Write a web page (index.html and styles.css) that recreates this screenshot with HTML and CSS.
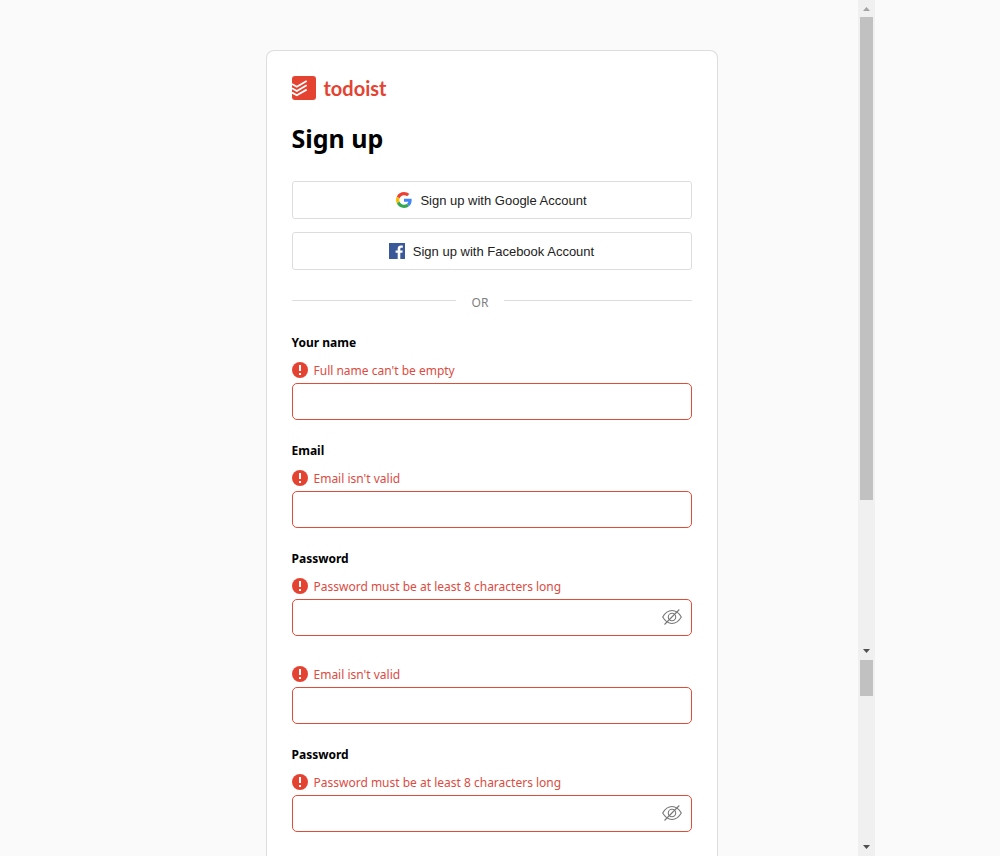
FILE: index.html
```html
<!DOCTYPE html>
<html lang="en">
<head>
<meta charset="utf-8">
<meta name="viewport" content="width=device-width, initial-scale=1">
<title>Todoist: Sign up</title>
<link rel="stylesheet" href="styles.css">
</head>
<body>
<svg class="sprite" aria-hidden="true">
  <symbol id="alert" viewBox="0 0 16 16">
    <circle cx="8" cy="8" r="8" fill="#e44332"/>
    <path d="M7 3h2v6H7zM7 11h2v2H7z" fill="#fff"/>
  </symbol>
  <symbol id="eye-off" viewBox="0 0 20 16">
    <g fill="none" stroke="#777" stroke-width="1.100">
      <path d="M.7 8C3 4 6.300 1.500 10 1.500S17 4 19.300 8C17 12 13.700 14.500 10 14.500S3 12 .7 8z"/>
      <circle cx="10" cy="8" r="3.700"/>
      <path d="M2.500 15.500 17.300.5"/>
    </g>
  </symbol>
</svg>
<div class="frame">
  <main class="page">
    <form class="card" novalidate>
      <div class="brand">
        <svg class="brand-mark" viewBox="0 0 24 24" aria-hidden="true">
          <rect width="24" height="24" rx="3" fill="#e44332"/>
          <g fill="none" stroke="#fff" stroke-width="1.800" stroke-linejoin="round">
            <path d="M0 8 4.800 10.700 14.700 5"/>
            <path d="M0 12.300 4.800 15 14.700 9.300"/>
            <path d="M0 16.600 4.800 19.300 14.700 13.600"/>
          </g>
        </svg>
        <span class="brand-name">todoist</span>
      </div>
      <h1 class="title">Sign up</h1>
      <div class="providers">
        <button class="provider" type="button">
          <svg class="icon" viewBox="0 0 48 48" aria-hidden="true">
            <path fill="#ea4335" d="M24 9.500c3.540 0 6.710 1.220 9.210 3.600l6.850-6.850C35.900 2.380 30.470 0 24 0 14.620 0 6.510 5.380 2.560 13.220l7.980 6.190C12.430 13.720 17.740 9.500 24 9.500z"/>
            <path fill="#4285f4" d="M46.980 24.550c0-1.570-.15-3.090-.38-4.550H24v9.020h12.940c-.58 2.960-2.260 5.480-4.780 7.180l7.730 6c4.510-4.180 7.090-10.360 7.090-17.650z"/>
            <path fill="#fbbc05" d="M10.530 28.590c-.48-1.450-.76-2.990-.76-4.590s.27-3.140.76-4.590l-7.980-6.190C.92 16.460 0 20.120 0 24s.92 7.540 2.560 10.780l7.970-6.190z"/>
            <path fill="#34a853" d="M24 48c6.480 0 11.930-2.130 15.890-5.810l-7.730-6c-2.150 1.450-4.920 2.300-8.160 2.300-6.260 0-11.570-4.220-13.470-9.910l-7.980 6.190C6.510 42.620 14.620 48 24 48z"/>
          </svg>
          Sign up with Google Account
        </button>
        <button class="provider" type="button">
          <svg class="icon" viewBox="0 0 16 16" aria-hidden="true">
            <path fill="#3b5998" d="M0 0h16v16H0z"/>
            <path fill="#fff" d="M8.700 16V9.800H6.600V7.400h2.100V5.600c0-2.100 1.300-3.200 3.200-3.200.9 0 1.600.1 1.900.1v2.200h-1.300c-1 0-1.200.5-1.200 1.200v1.500h2.400L13.400 9.800h-2.100V16z"/>
          </svg>
          Sign up with Facebook Account
        </button>
      </div>
      <div class="divider"><span class="divider-text">OR</span></div>

      <div class="field">
        <label class="label" for="name">Your name</label>
        <p class="error" id="name-error"><svg class="icon" aria-hidden="true"><use href="#alert"/></svg>Full name can't be empty</p>
        <div class="control"><input class="input" id="name" type="text" aria-describedby="name-error"></div>
      </div>
      <div class="field">
        <label class="label" for="email">Email</label>
        <p class="error" id="email-error"><svg class="icon" aria-hidden="true"><use href="#alert"/></svg>Email isn't valid</p>
        <div class="control"><input class="input" id="email" type="email" aria-describedby="email-error"></div>
      </div>
      <div class="field">
        <label class="label" for="password">Password</label>
        <p class="error" id="password-error"><svg class="icon" aria-hidden="true"><use href="#alert"/></svg>Password must be at least 8 characters long</p>
        <div class="control">
          <input class="input" id="password" type="password" aria-describedby="password-error">
          <button class="reveal" type="button" aria-label="Show password"><svg class="eye" aria-hidden="true"><use href="#eye-off"/></svg></button>
        </div>
      </div>
      <div class="field field-unlabelled">
        <p class="error" id="email2-error"><svg class="icon" aria-hidden="true"><use href="#alert"/></svg>Email isn't valid</p>
        <div class="control"><input class="input" id="email2" type="email" aria-label="Email" aria-describedby="email2-error"></div>
      </div>
      <div class="field">
        <label class="label" for="password2">Password</label>
        <p class="error" id="password2-error"><svg class="icon" aria-hidden="true"><use href="#alert"/></svg>Password must be at least 8 characters long</p>
        <div class="control">
          <input class="input" id="password2" type="password" aria-describedby="password2-error">
          <button class="reveal" type="button" aria-label="Show password"><svg class="eye" aria-hidden="true"><use href="#eye-off"/></svg></button>
        </div>
      </div>
    </form>
  </main>
  <div class="scroll" aria-hidden="true">
    <div class="track track-main">
      <svg class="arrow" viewBox="0 0 17 17"><path d="M5 11 8.500 7 12 11z" fill="#a3a3a3"/></svg>
      <div class="thumb thumb-large"></div>
      <svg class="arrow arrow-end" viewBox="0 0 17 17"><path d="M5 6 8.500 10 12 6z" fill="#505050"/></svg>
    </div>
    <div class="track track-rest">
      <div class="thumb thumb-small"></div>
      <svg class="arrow arrow-end" viewBox="0 0 17 17"><path d="M5 6 8.500 10 12 6z" fill="#505050"/></svg>
    </div>
  </div>
</div>
</body>
</html>
```
FILE: styles.css
```css
* {
  box-sizing: border-box;
}

body {
  margin: 0;
  background: #fafafa;
  color: #000;
  font-family: "Segoe UI", "Noto Sans", sans-serif;
  font-size: 13px;
}

.sprite {
  position: absolute;
  width: 0;
  height: 0;
}

.frame {
  display: flex;
  width: 100%;
  max-width: 750px;
  min-height: 100vh;
  margin: 0 auto;
}

.page {
  flex: 1;
  display: flex;
  justify-content: center;
  padding-top: 50px;
}

.card {
  width: 100%;
  max-width: 452px;
  padding: 25px 25px 24px;
  background: #fff;
  border: 1px solid #ddd;
  border-bottom: 0;
  border-radius: 8px 8px 0 0;
}

.brand {
  display: flex;
  align-items: flex-start;
  gap: 8px;
}

.brand-mark {
  width: 24px;
  height: 24px;
}

.brand-name {
  color: #e44332;
  font-family: Lato, sans-serif;
  font-size: 20px;
  font-weight: 700;
  line-height: 24px;
}

.title {
  margin: 20px 0 25px;
  font-size: 25px;
  font-weight: 700;
  line-height: 36px;
}

.providers {
  display: grid;
  gap: 13px;
}

.provider {
  display: flex;
  align-items: center;
  justify-content: center;
  gap: 8px;
  height: 38px;
  padding: 0;
  background: #fff;
  border: 1px solid #ddd;
  border-radius: 3px;
  color: #222;
  font-family: Arial, "Liberation Sans", sans-serif;
  font-size: 13px;
}

.icon {
  flex: none;
  width: 16px;
  height: 16px;
}

.divider {
  display: flex;
  align-items: center;
  margin: 19px 0 21px;
  color: #808080;
}

.divider::before,
.divider::after {
  content: "";
  flex: 164;
  border-top: 1px solid #ddd;
}

.divider::after {
  flex: 187;
}

.divider-text {
  padding: 4px 16px 0;
  font-size: 12px;
  line-height: 19px;
}

.field + .field {
  margin-top: 21px;
}

.field + .field-unlabelled {
  margin-top: 30px;
}

.label {
  display: block;
  margin-bottom: 9px;
  font-size: 12px;
  font-weight: 700;
  line-height: 20px;
}

.error {
  display: flex;
  align-items: flex-start;
  gap: 6px;
  margin: 0 0 3px;
  color: #db4c3f;
  font-size: 12px;
  line-height: 18px;
}

.control {
  position: relative;
}

.input {
  display: block;
  width: 100%;
  height: 37px;
  padding: 0 10px;
  background: #fff;
  border: 1px solid #de4c3a;
  border-radius: 5px;
  font: inherit;
}

.reveal {
  position: absolute;
  top: 0;
  right: 0;
  display: flex;
  align-items: center;
  height: 36px;
  padding: 0 10px;
  background: none;
  border: 0;
}

.eye {
  width: 20px;
  height: 16px;
}

.scroll {
  display: flex;
  flex-direction: column;
  width: 17px;
  background: #f0f0f0;
}

.track {
  display: flex;
  flex-direction: column;
  align-items: center;
}

.track-main {
  flex: 660;
}

.track-rest {
  flex: 196;
}

.arrow {
  flex: none;
  width: 17px;
  height: 17px;
}

.arrow-end {
  margin-top: auto;
}

.thumb {
  width: 13px;
  background: #c1c1c1;
}

.thumb-large {
  height: 483px;
}

.thumb-small {
  height: 36px;
}
```
